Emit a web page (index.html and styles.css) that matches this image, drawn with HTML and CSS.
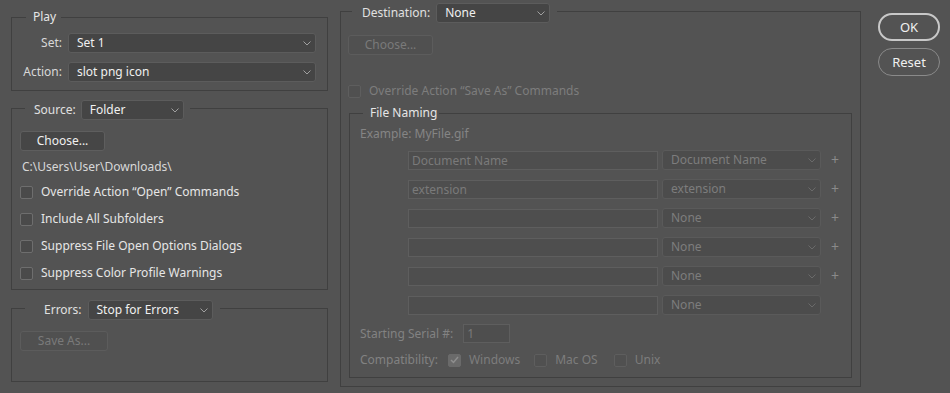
FILE: index.html
```html
<!DOCTYPE html>
<html lang="en">
<head>
<meta charset="UTF-8">
<title>Batch</title>
<link rel="stylesheet" href="styles.css">
</head>
<body>
<div class="dialog">
  <!-- Left column: Play / Source / Errors -->
  <div class="col-left">
    <fieldset class="group play">
      <legend class="legend-text play-legend">Play</legend>
      <div class="play-grid">
        <span class="row-label">Set:</span>
        <div class="dropdown">Set 1<svg class="chev" width="8" height="5" viewBox="0 0 8 5"><polyline points="0.5,0.5 4,4 7.5,0.5"/></svg></div>
        <span class="row-label">Action:</span>
        <div class="dropdown">slot png icon<svg class="chev" width="8" height="5" viewBox="0 0 8 5"><polyline points="0.5,0.5 4,4 7.5,0.5"/></svg></div>
      </div>
    </fieldset>

    <fieldset class="group source">
      <legend class="legend-select source-legend">
        <span class="legend-label">Source:</span>
        <div class="dropdown source-drop">Folder<svg class="chev" width="8" height="5" viewBox="0 0 8 5"><polyline points="0.5,0.5 4,4 7.5,0.5"/></svg></div>
      </legend>
      <button class="btn source-choose">Choose...</button>
      <div class="path">C:\Users\User\Downloads\</div>
      <div class="checks">
        <label class="check"><span class="box"></span>Override Action “Open” Commands</label>
        <label class="check"><span class="box"></span>Include All Subfolders</label>
        <label class="check"><span class="box"></span>Suppress File Open Options Dialogs</label>
        <label class="check"><span class="box"></span>Suppress Color Profile Warnings</label>
      </div>
    </fieldset>

    <fieldset class="group errors">
      <legend class="legend-select errors-legend">
        <span class="legend-label">Errors:</span>
        <div class="dropdown errors-drop">Stop for Errors<svg class="chev" width="8" height="5" viewBox="0 0 8 5"><polyline points="0.5,0.5 4,4 7.5,0.5"/></svg></div>
      </legend>
      <button class="btn disabled save-as">Save As...</button>
    </fieldset>
  </div>

  <!-- Right column: Destination -->
  <div class="col-right">
    <fieldset class="group dest">
      <legend class="legend-select dest-legend">
        <span class="legend-label">Destination:</span>
        <div class="dropdown dest-drop">None<svg class="chev" width="8" height="5" viewBox="0 0 8 5"><polyline points="0.5,0.5 4,4 7.5,0.5"/></svg></div>
      </legend>
      <button class="btn disabled dest-choose">Choose...</button>
      <label class="check disabled override"><span class="box"></span>Override Action “Save As” Commands</label>

      <fieldset class="group naming">
        <legend class="legend-text naming-legend">File Naming</legend>
        <div class="example">Example: MyFile.gif</div>
        <div class="name-grid">
          <div class="field">Document Name</div>
          <div class="dropdown disabled">Document Name<svg class="chev" width="8" height="5" viewBox="0 0 8 5"><polyline points="0.5,0.5 4,4 7.5,0.5"/></svg></div>
          <span class="plus">+</span>

          <div class="field">extension</div>
          <div class="dropdown disabled">extension<svg class="chev" width="8" height="5" viewBox="0 0 8 5"><polyline points="0.5,0.5 4,4 7.5,0.5"/></svg></div>
          <span class="plus">+</span>

          <div class="field"></div>
          <div class="dropdown disabled">None<svg class="chev" width="8" height="5" viewBox="0 0 8 5"><polyline points="0.5,0.5 4,4 7.5,0.5"/></svg></div>
          <span class="plus">+</span>

          <div class="field"></div>
          <div class="dropdown disabled">None<svg class="chev" width="8" height="5" viewBox="0 0 8 5"><polyline points="0.5,0.5 4,4 7.5,0.5"/></svg></div>
          <span class="plus">+</span>

          <div class="field"></div>
          <div class="dropdown disabled">None<svg class="chev" width="8" height="5" viewBox="0 0 8 5"><polyline points="0.5,0.5 4,4 7.5,0.5"/></svg></div>
          <span class="plus">+</span>

          <div class="field"></div>
          <div class="dropdown disabled">None<svg class="chev" width="8" height="5" viewBox="0 0 8 5"><polyline points="0.5,0.5 4,4 7.5,0.5"/></svg></div>
          <span class="plus"></span>
        </div>
        <div class="serial-row">
          <span class="dim-label serial-label">Starting Serial #:</span>
          <div class="field serial-field">1</div>
        </div>
        <div class="compat-row">
          <span class="dim-label compat-label">Compatibility:</span>
          <label class="check disabled"><span class="box checked"><svg width="9" height="8" viewBox="0 0 9 8"><polyline points="1,4 3.5,6.5 8,1"/></svg></span>Windows</label>
          <label class="check disabled mac"><span class="box"></span>Mac OS</label>
          <label class="check disabled unix"><span class="box"></span>Unix</label>
        </div>
      </fieldset>
    </fieldset>
  </div>

  <!-- Buttons -->
  <div class="col-buttons">
    <button class="pill ok">OK</button>
    <button class="pill reset">Reset</button>
  </div>
</div>
</body>
</html>
```

FILE: styles.css
```css
/* General */
body {
  margin: 0;
  background-color: #535353;
  color: #e0e0e0;
  font-family: "Noto Sans", "Open Sans", sans-serif;
  font-size: 12px;
  line-height: 16px;
}
.dialog {
  display: flex;
  align-items: flex-start;
  padding-left: 11px;
  height: 393px;
  box-sizing: border-box;
}
.col-left {
  width: 317px;
  display: flex;
  flex-direction: column;
}
.col-right {
  width: 521px;
  margin-left: 12px;
}
.col-buttons {
  width: 62px;
  margin-left: 17px;
  padding-top: 13px;
  display: flex;
  flex-direction: column;
  gap: 7px;
}

/* Group boxes */
.group {
  margin: 0;
  padding: 0;
  border: 1px solid #404040;
  min-width: 0;
}
.legend-text {
  color: #e6e6e6;
}
.legend-select {
  display: flex;
  align-items: center;
  height: 16px;
}
.legend-select .dropdown {
  margin-bottom: -4px;
}
.legend-select .legend-label {
  margin-bottom: -4px;
}
.legend-label {
  color: #e0e0e0;
}

/* Play */
.play {
  margin-top: 9px;
  padding: 8px 11px 8px 0;
}
.play-legend {
  margin-left: 14px;
  padding: 0 5px 0 7px;
}
.play-grid {
  display: grid;
  grid-template-columns: 50px 1fr;
  column-gap: 6px;
  row-gap: 9px;
  align-items: center;
}
.row-label {
  text-align: right;
  color: #d8d8d8;
}

/* Dropdowns */
.dropdown {
  height: 20px;
  box-sizing: border-box;
  display: flex;
  align-items: center;
  justify-content: space-between;
  padding: 0 4px 0 8px;
  background-color: #454545;
  border: 1px solid #5c5c5c;
  border-radius: 3px;
  color: #f0f0f0;
}
.chev {
  fill: none;
  stroke: #a0a0a0;
  stroke-width: 1;
}
.dropdown.disabled {
  background-color: #4c4c4c;
  border-color: #5a5a5a;
  color: #7d7d7d;
}
.dropdown.disabled .chev {
  stroke: #6a6a6a;
}

/* Buttons */
.btn {
  font: inherit;
  height: 20px;
  box-sizing: border-box;
  padding: 0;
  background-color: #464646;
  border: 1px solid #5e5e5e;
  border-radius: 3px;
  color: #f0f0f0;
  display: block;
}
.btn.disabled {
  background-color: #505050;
  border-color: #5c5c5c;
  color: #7a7a7a;
}

/* Source */
.source {
  margin-top: 9px;
  padding: 15px 0 8px 8px;
}
.source-legend {
  margin-left: 5px;
  padding: 0 6px 0 9px;
  gap: 5px;
}
.source-drop {
  width: 103px;
}
.source-choose {
  width: 85px;
}
.path {
  margin-top: 8px;
  margin-left: 2px;
  color: #d8d8d8;
}
.checks {
  margin-top: 9px;
  display: flex;
  flex-direction: column;
  gap: 11px;
}

/* Checkboxes */
.check {
  display: flex;
  align-items: center;
  height: 16px;
  color: #e6e6e6;
}
.box {
  width: 13px;
  height: 13px;
  box-sizing: border-box;
  border: 1px solid #6e6e6e;
  border-radius: 2px;
  background-color: #4a4a4a;
  margin-right: 8px;
  display: flex;
  align-items: center;
  justify-content: center;
}
.check.disabled {
  color: #7d7d7d;
}
.check.disabled .box {
  border-color: #5e5e5e;
  background-color: #505050;
}
.check.disabled .box.checked {
  background-color: #6a6a6a;
  border-color: #6a6a6a;
}
.box svg {
  fill: none;
  stroke: #8e8e8e;
  stroke-width: 1.5;
}

/* Errors */
.errors {
  margin-top: 10px;
  padding: 15px 0 30px 8px;
}
.errors-legend {
  margin-left: 5px;
  padding: 0 7px 0 19px;
  gap: 6px;
}
.errors-drop {
  width: 125px;
}
.save-as {
  width: 88px;
}

/* Destination */
.dest {
  margin-top: 3px;
  padding: 16px 8px 8px 7px;
}
.dest-legend {
  margin-left: 4px;
  padding: 0 7px 0 10px;
  gap: 6px;
}
.dest-drop {
  width: 114px;
}
.dest-choose {
  width: 85px;
}
.override {
  margin-top: 28px;
}

/* File Naming */
.naming {
  margin: 6px 0 0 1px;
  padding: 5px 0 9px 10px;
}
.naming-legend {
  margin-left: 3px;
  padding: 0 2px 0 7px;
}
.example {
  color: #858585;
}
.name-grid {
  margin: 8px 0 0 48px;
  display: grid;
  grid-template-columns: 250px 159px 14px;
  column-gap: 4px;
  row-gap: 9px;
  align-items: center;
}
.field {
  height: 19px;
  box-sizing: border-box;
  border: 1px solid #5e5e5e;
  background-color: #4e4e4e;
  color: #7a7a7a;
  padding: 0 3px;
  line-height: 17px;
}
.plus {
  color: #8a8a8a;
  font-size: 14px;
  text-align: right;
}
.dim-label {
  color: #828282;
  margin-right: 10px;
}
.serial-row {
  margin-top: 9px;
  display: flex;
  align-items: center;
}
.serial-field {
  width: 47px;
}
.compat-row {
  margin-top: 9px;
  display: flex;
  align-items: center;
}
.mac {
  margin-left: 14px;
}
.unix {
  margin-left: 16px;
}

/* Pill buttons */
.pill {
  font: inherit;
  font-size: 13px;
  width: 62px;
  height: 28px;
  border-radius: 14px;
  background: transparent;
  color: #f0f0f0;
  padding: 0;
}
.ok {
  border: 2px solid #c8c8c8;
}
.reset {
  border: 1px solid #8a8a8a;
}
```
